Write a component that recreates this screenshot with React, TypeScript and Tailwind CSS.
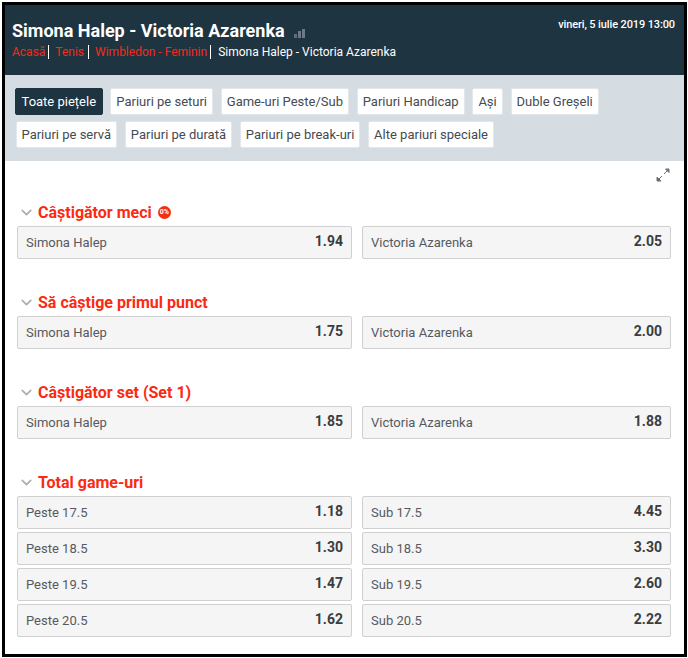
import React from 'react';
import { ChevronDown } from 'lucide-react';

const row1 = ['Toate piețele', 'Pariuri pe seturi', 'Game-uri Peste/Sub', 'Pariuri Handicap', 'Ași', 'Duble Greșeli'];
const row2 = ['Pariuri pe servă', 'Pariuri pe durată', 'Pariuri pe break-uri', 'Alte pariuri speciale'];

const markets = [
  {
    title: 'Câștigător meci',
    live: true,
    rows: [[['Simona Halep', '1.94'], ['Victoria Azarenka', '2.05']]],
  },
  {
    title: 'Să câștige primul punct',
    rows: [[['Simona Halep', '1.75'], ['Victoria Azarenka', '2.00']]],
  },
  {
    title: 'Câștigător set (Set 1)',
    rows: [[['Simona Halep', '1.85'], ['Victoria Azarenka', '1.88']]],
  },
  {
    title: 'Total game-uri',
    rows: [
      [['Peste 17.5', '1.18'], ['Sub 17.5', '4.45']],
      [['Peste 18.5', '1.30'], ['Sub 18.5', '3.30']],
      [['Peste 19.5', '1.47'], ['Sub 19.5', '2.60']],
      [['Peste 20.5', '1.62'], ['Sub 20.5', '2.22']],
    ],
  },
];

const Chip = ({ label, active }: { label: string; active?: boolean }) => (
  <div
    className={`h-[27px] flex items-center rounded-[2px] text-[13px] border ${
      active ? 'px-[5.5px] bg-[#1e3440] border-[#1e3440] text-white' : 'px-[5px] bg-white border-[#e3e7ea] text-[#444b52]'
    }`}
  >
    {label}
  </div>
);

const Odd = ({ name, value, className }: { name: string; value: string; className: string }) => (
  <div className={`${className} h-[33px] flex justify-between bg-[#f5f5f5] border border-[#d0d0d0] rounded-[2px] pl-2 pr-2`}>
    <span className="text-[13px] text-[#555a60] mt-[7px] leading-[18px]">{name}</span>
    <span className="text-[14px] font-bold text-[#3a3d40] mt-[5px] leading-[18px]">{value}</span>
  </div>
);

const App: React.FC = () => {
  return (
    <div className="w-[688px] h-[658px] bg-white pl-[2px] pt-[2px] font-['Roboto',sans-serif]">
      <div className="w-[685px] h-[655px] border-[3px] border-black overflow-hidden flex flex-col">
        {/* Header */}
        <div className="h-[70px] bg-[#1e3440] flex justify-between pl-[7px] pr-[9px] shrink-0">
          <div>
            <div className="flex items-center mt-[14px] h-[24px]">
              <span className="text-[18px] font-bold text-white leading-[24px]">Simona Halep - Victoria Azarenka</span>
              <svg className="ml-[9px] mt-[5px]" width="11" height="9" viewBox="0 0 11 9">
                <rect x="0" y="5" width="3" height="4" fill="#5f6f79" />
                <rect x="4" y="2" width="3" height="7" fill="#6b7a84" />
                <rect x="8" y="0" width="3" height="9" fill="#6b7a84" />
              </svg>
            </div>
            <div className="flex items-center text-[12px] leading-[16px] mt-[1px]">
              <span className="text-[#f52a1a]">Acasă</span>
              <span className="w-px h-[14px] bg-white ml-[3px] mr-[6px]" />
              <span className="text-[#f52a1a]">Tenis</span>
              <span className="w-px h-[14px] bg-white ml-[4px] mr-[6px]" />
              <span className="text-[#f52a1a]">Wimbledon - Feminin</span>
              <span className="w-px h-[14px] bg-white ml-[3px] mr-[7px]" />
              <span className="text-white">Simona Halep - Victoria Azarenka</span>
            </div>
          </div>
          <div className="text-[11px] font-medium tracking-[-0.12px] text-white mt-[12px] leading-[16px]">vineri, 5 iulie 2019 13:00</div>
        </div>

        {/* Market filters */}
        <div className="h-[86px] bg-[#d5dde2] pt-[13px] pl-[10px] flex flex-col gap-[6px] shrink-0">
          <div className="flex gap-[7.75px]">
            {row1.map((label, i) => (
              <Chip key={label} label={label} active={i === 0} />
            ))}
          </div>
          <div className="flex gap-[7.75px] pl-[0.5px]">
            {row2.map((label) => (
              <Chip key={label} label={label} />
            ))}
          </div>
        </div>

        {/* Markets */}
        <div className="flex-1 bg-white pl-[12px] pr-[13px] relative">
          <div className="flex justify-end pr-[1px] pt-[7px] h-[26px]">
            <svg width="14" height="14" viewBox="0 0 14 14" fill="none" stroke="#6a747d" strokeWidth="1">
              <path d="M8 6 L12 2" />
              <path d="M9.5 1 H13 V4.5 Z" fill="#6a747d" />
              <path d="M6 8 L2 12" />
              <path d="M1 9 V13 H5 Z" fill="#5c6670" />
            </svg>
          </div>
          <div className="flex flex-col gap-[30px] pt-[12px]">
            {markets.map((market) => (
              <div key={market.title}>
                <div className="flex items-center h-[27px]">
                  <ChevronDown size={17} strokeWidth={2.5} className="text-[#a9b0b6] ml-[1px] mr-[3px]" />
                  <span className="text-[16px] font-bold text-[#fb2a12] leading-[22px]">{market.title}</span>
                  {market.live && (
                    <span className="ml-[6px] w-[13px] h-[13px] rounded-full bg-[#f0300e] text-white text-[7px] font-bold flex items-center justify-center">
                      0%
                    </span>
                  )}
                </div>
                <div className="flex flex-col gap-[3px]">
                  {market.rows.map((row) => (
                    <div key={row[0][0]} className="flex gap-[10px]">
                      <Odd name={row[0][0]} value={row[0][1]} className="w-[335px]" />
                      <Odd name={row[1][0]} value={row[1][1]} className="w-[309px]" />
                    </div>
                  ))}
                </div>
              </div>
            ))}
          </div>
        </div>
      </div>
    </div>
  );
};

export default App;
